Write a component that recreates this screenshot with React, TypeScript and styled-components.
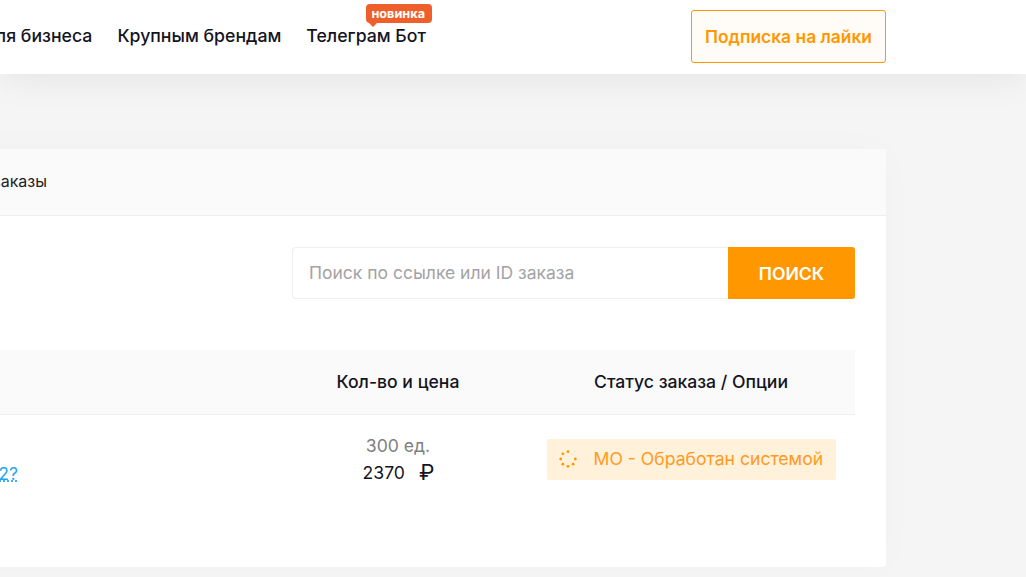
import React from 'react';
import styled, {createGlobalStyle} from 'styled-components';

const GlobalStyle = createGlobalStyle`
    html, body {
        margin: 0;
        height: 100%;
        overflow: hidden;
        background: #f5f5f5;
        font-family: Inter, "Noto Sans", sans-serif;
    }
`;

const Page = styled.div`
    width: 1026px;
    height: 577px;
    overflow: hidden;
`;

const Header = styled.header`
    position: relative;
    z-index: 2;
    height: 74px;
    padding-right: 140px;
    display: flex;
    justify-content: flex-end;
    align-items: center;
    gap: 265px;
    background: #fff;
    box-shadow: 0 0 40px rgba(0, 0, 0, 0.09);
`;

const Nav = styled.nav`
    flex: none;
    display: flex;
    gap: 25px;
    margin-top: -3px;
    white-space: nowrap;
`;

const NavLink = styled.a`
    position: relative;
    font-size: 17.7px;
    font-weight: 500;
    line-height: 24px;
    color: #14141f;
`;

const NewBadge = styled.span`
    position: absolute;
    top: -20px;
    right: -6px;
    height: 19px;
    padding: 0 7px 0 5px;
    font-size: 12.7px;
    font-weight: 700;
    line-height: 20px;
    color: #fff;
    background: #ee5f2c;
    border-radius: 4px;

    &::after {
        content: '';
        position: absolute;
        left: 2px;
        bottom: -4px;
        border-left: 5px solid transparent;
        border-right: 5px solid transparent;
        border-top: 5px solid #ee5f2c;
    }
`;

const SubscribeButton = styled.button`
    flex: none;
    width: 195px;
    height: 53px;
    margin-top: -1px;
    padding: 0 0 1px;
    font: 600 17.4px Inter, sans-serif;
    color: #ff9800;
    background: #fffbf6;
    border: 1px solid #ff9800;
    border-radius: 3px;
`;

const Main = styled.main`
    display: flex;
    justify-content: flex-end;
    padding: 75px 140px 0 0;
`;

const Card = styled.section`
    flex: none;
    width: 1100px;
    height: 418px;
    background: #fff;
    border-radius: 3px;
    box-shadow: 0 0 40px rgba(0, 0, 0, 0.02);
`;

const CardHeader = styled.div`
    height: 66px;
    display: flex;
    justify-content: flex-end;
    align-items: center;
    background: #fafafa;
    border-bottom: 1px solid #eeeeee;
    overflow: hidden;
`;

const CardTitle = styled.span`
    margin-right: 839px;
    margin-top: -2px;
    font-size: 16px;
    color: #222;
    white-space: nowrap;
`;

const CardBody = styled.div`
    padding: 31px 31px 0;
`;

const SearchRow = styled.form`
    display: flex;
    justify-content: flex-end;
`;

const SearchInput = styled.input`
    box-sizing: border-box;
    width: 436px;
    height: 52px;
    padding: 0 16px 2px;
    font: 400 17.5px Inter, sans-serif;
    background: #fff;
    border: 1px solid #eeeeee;
    border-right: 0;
    border-radius: 4px 0 0 4px;
    outline: none;

    &::placeholder {
        color: #a3a3a3;
        opacity: 1;
    }
`;

const SearchButton = styled.button`
    width: 127px;
    height: 52px;
    padding: 0;
    font: 600 17.6px Inter, sans-serif;
    color: #fff;
    background: #ff9800;
    border: 0;
    border-radius: 0 3px 3px 0;
`;

const TableHead = styled.div`
    box-sizing: border-box;
    margin-top: 51px;
    height: 65px;
    padding-bottom: 2px;
    display: flex;
    justify-content: flex-end;
    align-items: center;
    background: #fafafa;
    border-bottom: 1px solid #eeeeee;
    font-size: 17.6px;
    font-weight: 500;
    color: #14141f;
`;

const TableRow = styled.div`
    height: 88px;
    display: flex;
    justify-content: flex-end;
    align-items: center;
`;

const QuestionCell = styled.a`
    margin-right: 249px;
    margin-top: 29px;
    font-size: 17.6px;
    color: #1ea7f2;
    text-decoration: underline dotted;
`;

const QtyColumn = styled.div`
    box-sizing: border-box;
    width: 260px;
    padding-left: 2px;
    text-align: center;
`;

const StatusColumn = styled.div`
    width: 328px;
    display: flex;
    justify-content: center;
`;

const Qty = styled.div`
    font-size: 17.6px;
    line-height: 27px;
    color: #808080;
`;

const Price = styled.div`
    display: flex;
    justify-content: center;
    align-items: center;
    gap: 14px;
    padding-left: 1px;
    font-size: 17.6px;
    line-height: 27px;
    color: #14141f;
`;

const RubleSign = styled.span`
    font-size: 22px;
    line-height: 27px;
`;

const StatusBadge = styled.div`
    box-sizing: border-box;
    width: 289px;
    height: 41px;
    display: flex;
    align-items: center;
    gap: 17px;
    padding: 0 0 2px 12px;
    font-size: 17.6px;
    color: #ff9a1f;
    background: #fff1da;
    border-radius: 2px;
`;

const SpinnerIcon = styled.svg`
    flex: none;
    margin-top: 2px;
`;

// seven dots, the upper right one of the ring is left out
const dots = [-90, 0, 45, 90, 135, 180, 225].map(deg => {
    const a = (deg * Math.PI) / 180;
    return {x: 9 + 7.3 * Math.cos(a), y: 9 + 7.3 * Math.sin(a)};
});

const Spinner = () => (
    <SpinnerIcon width="18" height="18" viewBox="0 0 18 18">
        {dots.map((d, i) => (
            <circle key={i} cx={d.x} cy={d.y} r="1.4" fill="#ff9800"/>
        ))}
    </SpinnerIcon>
);

const App: React.FC = () => (
    <Page>
        <GlobalStyle/>
        <Header>
            <Nav>
                <NavLink>Для бизнеса</NavLink>
                <NavLink>Крупным брендам</NavLink>
                <NavLink>
                    Телеграм Бот
                    <NewBadge>новинка</NewBadge>
                </NavLink>
            </Nav>
            <SubscribeButton>Подписка на лайки</SubscribeButton>
        </Header>
        <Main>
            <Card>
                <CardHeader>
                    <CardTitle>Мои заказы</CardTitle>
                </CardHeader>
                <CardBody>
                    <SearchRow>
                        <SearchInput placeholder="Поиск по ссылке или ID заказа"/>
                        <SearchButton type="button">ПОИСК</SearchButton>
                    </SearchRow>
                    <TableHead>
                        <QtyColumn>Кол-во и цена</QtyColumn>
                        <StatusColumn>Статус заказа / Опции</StatusColumn>
                    </TableHead>
                    <TableRow>
                        <QuestionCell>2?</QuestionCell>
                        <QtyColumn>
                            <Qty>300 ед.</Qty>
                            <Price>
                                <span>2370</span>
                                <RubleSign>₽</RubleSign>
                            </Price>
                        </QtyColumn>
                        <StatusColumn>
                            <StatusBadge>
                                <Spinner/>
                                МО - Обработан системой
                            </StatusBadge>
                        </StatusColumn>
                    </TableRow>
                </CardBody>
            </Card>
        </Main>
    </Page>
);

export default App;
